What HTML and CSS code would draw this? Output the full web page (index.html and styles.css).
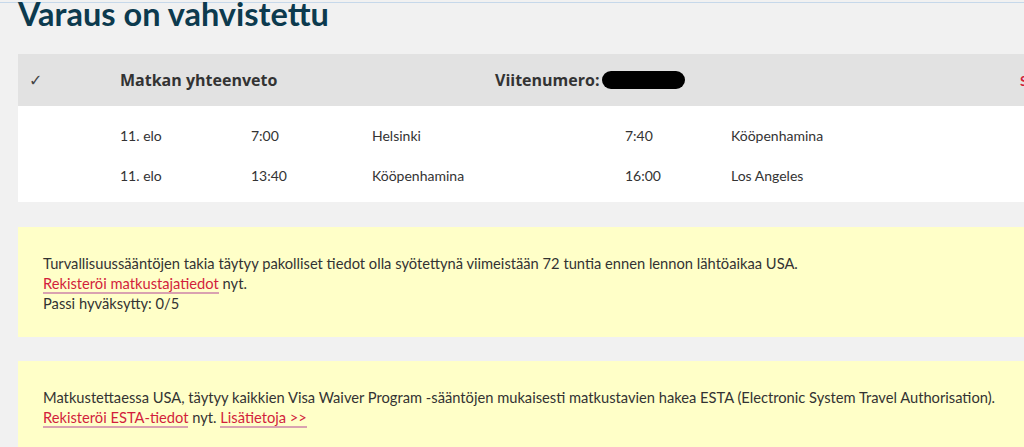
FILE: index.html
```html
<!DOCTYPE html>
<html lang="fi">
<head>
    <meta charset="UTF-8">
    <meta name="viewport" content="width=device-width, initial-scale=1.0">
    <title>Varaus on vahvistettu</title>
    <link rel="stylesheet" href="styles.css">
</head>
<body>
    <div class="topline"></div>
    <div class="page">
        <h1 class="title">Varaus on vahvistettu</h1>

        <div class="summary">
            <div class="summary-head">
                <span class="check">&#10003;</span>
                <span class="head-title">Matkan yhteenveto</span>
                <span class="head-title">Viitenumero:<span class="hidden-ref"></span></span>
                <a class="head-link" href="#">Sulje</a>
            </div>
            <div class="legs">
                <div class="leg">
                    <span>11. elo</span>
                    <span>7:00</span>
                    <span>Helsinki</span>
                    <span>7:40</span>
                    <span>Kööpenhamina</span>
                </div>
                <div class="leg">
                    <span>11. elo</span>
                    <span>13:40</span>
                    <span>Kööpenhamina</span>
                    <span>16:00</span>
                    <span>Los Angeles</span>
                </div>
            </div>
        </div>

        <div class="notice">
            Turvallisuussääntöjen takia täytyy pakolliset tiedot olla syötettynä viimeistään 72 tuntia ennen lennon lähtöaikaa USA.<br>
            <a class="link" href="#">Rekisteröi matkustajatiedot</a> nyt.<br>
            Passi hyväksytty: 0/5
        </div>

        <div class="notice">
            Matkustettaessa USA, täytyy kaikkien Visa Waiver Program -sääntöjen mukaisesti matkustavien hakea ESTA (Electronic System Travel Authorisation).<br>
            <a class="link" href="#">Rekisteröi ESTA-tiedot</a> nyt. <a class="link" href="#">Lisätietoja &gt;&gt;</a>
        </div>
    </div>
</body>
</html>
```

FILE: styles.css
```css
body {
    margin: 0;
    background-color: #f1f1f1;
    font-family: "Lato", "Open Sans", sans-serif;
    color: #333;
    overflow: hidden;
}
.topline {
    height: 2px;
    border-bottom: 1px solid #c6d8ea;
}
.page {
    width: 1100px;
    padding-left: 18px;
}
.title {
    margin: -6px 0 0;
    font-size: 32.5px;
    line-height: 34px;
    font-weight: 700;
    color: #0c3a4e;
}
.summary {
    margin-top: 23px;
}
.summary-head {
    display: grid;
    grid-template-columns: 102px 375px 525px auto;
    align-items: center;
    height: 52px;
    background-color: #e2e2e2;
}
.check {
    padding-left: 11px;
    font-family: "DejaVu Sans", sans-serif;
    font-size: 16px;
    color: #444;
}
.head-title {
    font-family: "Open Sans", sans-serif;
    font-size: 16px;
    font-weight: 700;
    color: #333;
    display: flex;
    align-items: center;
}
.hidden-ref {
    display: inline-block;
    width: 83px;
    height: 18px;
    margin-left: 2px;
    background-color: #000;
    border-radius: 9px;
}
.head-link {
    color: #d21e3c;
    font-size: 14px;
    font-weight: 700;
    text-decoration: none;
}
.legs {
    background-color: #fff;
    padding: 9px 0 7px;
}
.leg {
    display: grid;
    grid-template-columns: 102px 131px 121px 253px 106px auto;
    height: 40px;
    align-items: center;
    font-size: 14px;
}
.leg span:first-child {
    grid-column: 2;
}
.notice {
    margin-top: 25px;
    padding: 26px 25px 24px;
    background-color: #ffffc8;
    font-size: 14.7px;
    line-height: 20px;
}
.notice + .notice {
    margin-top: 24px;
}
.link {
    color: #d21e3c;
    text-decoration: none;
    border-bottom: 2px solid #d9a2b0;
}
```
